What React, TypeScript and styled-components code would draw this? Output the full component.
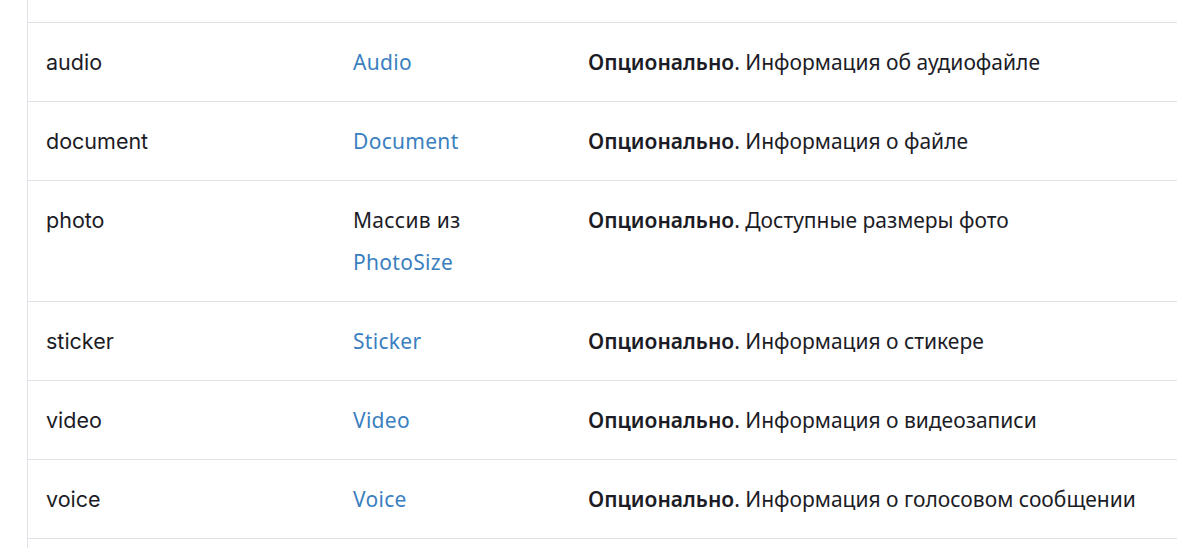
import React from "react";
import styled, { createGlobalStyle } from "styled-components";

const Global = createGlobalStyle`
  html, body { margin: 0; padding: 0; background: #ffffff; }
  body { font-family: "Noto Sans", sans-serif; }
`;

const Page = styled.div`
  width: 1177px;
  height: 548px;
  overflow: hidden;
  padding-left: 27px;
  box-sizing: border-box;
`;

const Table = styled.div`
  border-left: 1px solid #e1e1e8;
  padding-top: 22px;
  height: 100%;
  box-sizing: border-box;
`;

const Row = styled.div`
  display: grid;
  grid-template-columns: 307px 235px 1fr;
  border-top: 1px solid #e1e1e8;
  &:last-child { border-bottom: 1px solid #e1e1e8; }
`;

const Cell = styled.div`
  padding: 18px 0 18px 18px;
  line-height: 42px;
  font-size: 21px;
  color: #1c1c26;
`;

const NameCell = styled(Cell)`
  font-family: Inter, "Liberation Sans", sans-serif;
  font-size: 21.5px;
`;

const TypeCell = styled(Cell)`
  font-family: "Noto Sans", sans-serif;
  letter-spacing: 0.3px;
`;

const DescCell = styled(Cell)`
  font-family: "Noto Sans", sans-serif;
`;

const Link = styled.a`
  color: #3b7fc0;
  text-decoration: none;
`;

const Strong = styled.b`
  font-weight: 600;
`;

type Field = { name: string; prefix?: string; type: string; desc: string };

const fields: Field[] = [
  { name: "audio", type: "Audio", desc: "Информация об аудиофайле" },
  { name: "document", type: "Document", desc: "Информация о файле" },
  { name: "photo", prefix: "Массив из", type: "PhotoSize", desc: "Доступные размеры фото" },
  { name: "sticker", type: "Sticker", desc: "Информация о стикере" },
  { name: "video", type: "Video", desc: "Информация о видеозаписи" },
  { name: "voice", type: "Voice", desc: "Информация о голосовом сообщении" },
];

export default function App() {
  return (
    <>
      <Global />
      <Page>
        <Table>
          {fields.map((f) => (
            <Row key={f.name}>
              <NameCell>{f.name}</NameCell>
              <TypeCell>
                {f.prefix && (
                  <>
                    {f.prefix}
                    <br />
                  </>
                )}
                <Link href="#">{f.type}</Link>
              </TypeCell>
              <DescCell>
                <Strong>Опционально</Strong>. {f.desc}
              </DescCell>
            </Row>
          ))}
        </Table>
      </Page>
    </>
  );
}
